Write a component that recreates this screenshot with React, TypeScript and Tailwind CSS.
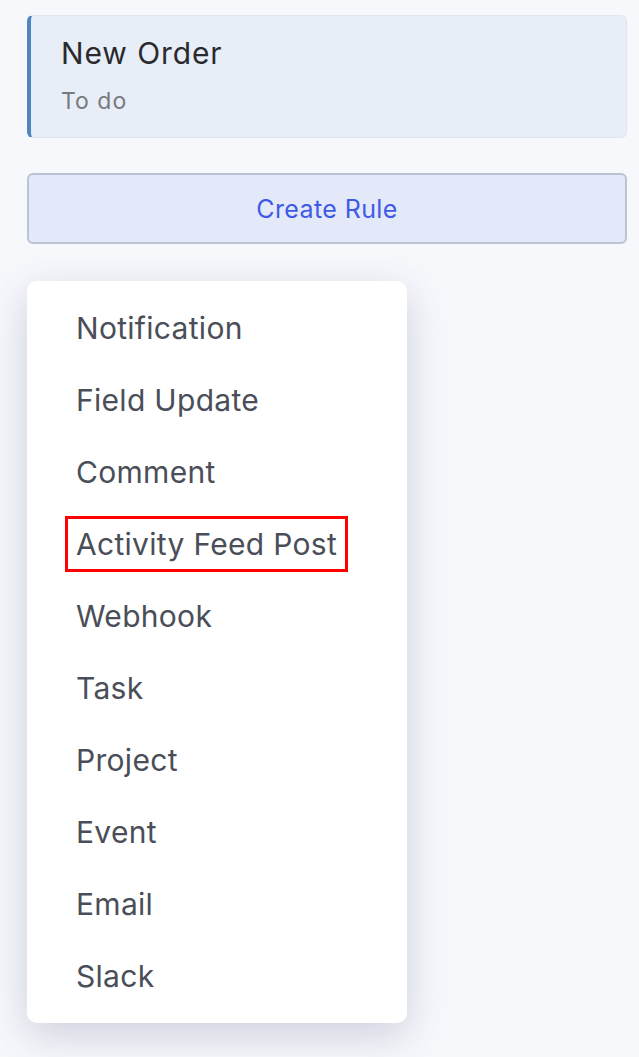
import React from "react";

const items = [
  "Notification",
  "Field Update",
  "Comment",
  "Activity Feed Post",
  "Webhook",
  "Task",
  "Project",
  "Event",
  "Email",
  "Slack",
];

export default function App() {
  return (
    <div
      className="min-h-[1057px] w-full bg-[#f7f8fc] pl-[27px] pr-[12px] pt-[15px]"
      style={{ fontFamily: "Inter, 'Noto Sans', sans-serif" }}
    >
      <div className="flex h-[123px] flex-col rounded-[6px] border border-l-4 border-[#e1e6ee] border-l-[#4f86bf] bg-[#e8eef7] pl-[30px] pt-[19px]">
        <div className="text-[30px] leading-[36px] tracking-[0.9px] text-[#2a2a2e]">New Order</div>
        <div className="mt-[16px] text-[23px] leading-[28px] tracking-[1px] text-[#787a7e]">To do</div>
      </div>

      <button className="mt-[35px] flex h-[71px] w-full items-center justify-center rounded-[6px] border-2 border-[#bcc3d4] bg-[#e3e9f8] pt-[3px] text-[25px] tracking-[0.4px] text-[#3f5ae6]">
        Create Rule
      </button>

      <div className="mt-[37px] w-[380px] rounded-[10px] bg-white py-[11px] shadow-[0_12px_40px_rgba(60,70,110,0.22)]">
        {items.map((it) => (
          <div key={it} className="flex h-[72px] items-center pl-[38px]">
            {it === "Activity Feed Post" ? (
              <span className="flex h-[56px] items-center border-[3px] border-[#ff0000] pl-[8px] pr-[8px] text-[30px] tracking-[0.3px] text-[#4a4e58]">
                {it}
              </span>
            ) : (
              <span className="pl-[11px] text-[30px] tracking-[0.3px] text-[#4a4e58]">{it}</span>
            )}
          </div>
        ))}
      </div>
    </div>
  );
}
